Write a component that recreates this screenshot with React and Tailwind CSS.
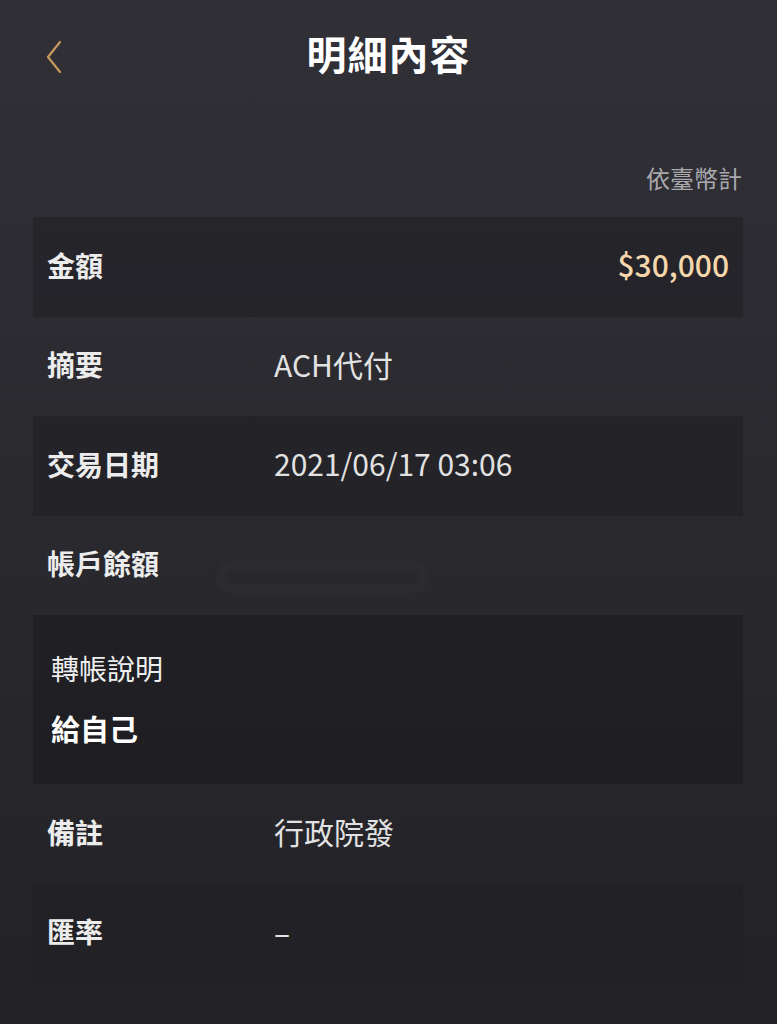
import React from "react";

const font = { fontFamily: '"Noto Sans CJK TC", "Liberation Sans", sans-serif' };

const rows = [
  { label: "金額", value: "$30,000", amount: true, shaded: true },
  { label: "摘要", value: "ACH代付" },
  { label: "交易日期", value: "2021/06/17 03:06", shaded: true },
  { label: "帳戶餘額", hidden: true },
];

const rows2 = [
  { label: "備註", value: "行政院發" },
  { label: "匯率", value: "–", shaded: true },
];

const Row = ({ label, value, amount, shaded, hidden }) => (
  <div
    className={`flex items-center h-[99.5px] px-[14px] pb-[4px] ${
      shaded ? "bg-[#1f1f24]/60" : ""
    }`}
  >
    <div className="w-[227px] text-[28px] font-semibold text-[#ececec]">{label}</div>
    {amount ? (
      <div className="ml-auto text-[30px] font-medium text-[#f6d7ac]">{value}</div>
    ) : hidden ? (
      <div className="relative h-[26px] w-[205px] mt-[28px] -ml-[54px]">
        <div className="absolute inset-0 rounded-[10px] border-2 border-[#6a6a72]/25 blur-[3px]" />
      </div>
    ) : (
      <div className="text-[30px] text-[#e2e2e2]">{value}</div>
    )}
  </div>
);

export default function App() {
  return (
    <div
      className="w-[777px] h-[1024px] bg-gradient-to-b from-[#303036] to-[#222227] overflow-hidden"
      style={font}
    >
      <div className="relative flex items-center justify-center h-[110px]">
        <svg
          className="absolute left-[44px] top-[40px]"
          width="20"
          height="34"
          viewBox="0 0 20 34"
          fill="none"
        >
          <path d="M16 2 L4 17 L16 32" stroke="#c89a5e" strokeWidth="2.2" strokeLinecap="round" strokeLinejoin="round" />
        </svg>
        <h1 className="text-[40px] font-bold text-white tracking-[1px] pb-[4px]">明細內容</h1>
      </div>

      <div className="flex justify-end pr-[35px] pt-[50px] pb-[21px]">
        <span className="text-[24px] text-[#a9a9ad]">依臺幣計</span>
      </div>

      <div className="ml-[33px] mr-[34px]">
        {rows.map((r) => (
          <Row key={r.label} {...r} />
        ))}
        <div className="h-[169px] bg-[#1c1c21]/70 px-[18px] pb-[2px] flex flex-col justify-center gap-[18px]">
          <div className="text-[28px] text-[#eeeeee]">轉帳說明</div>
          <div className="text-[29px] font-bold text-white">給自己</div>
        </div>
        {rows2.map((r) => (
          <Row key={r.label} {...r} />
        ))}
      </div>
    </div>
  );
}
